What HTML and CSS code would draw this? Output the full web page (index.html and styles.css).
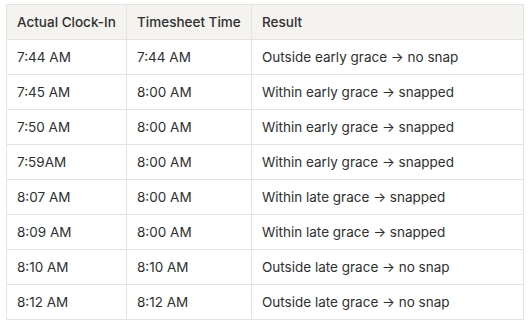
FILE: index.html
```html
<!DOCTYPE html>
<html>
<head>
<meta charset="utf-8">
<link rel="stylesheet" href="styles.css">
</head>
<body>
<table class="grace">
  <thead>
    <tr><th class="c1">Actual Clock-In</th><th class="c2">Timesheet Time</th><th>Result</th></tr>
  </thead>
  <tbody>
    <tr><td>7:44 AM</td><td>7:44 AM</td><td>Outside early grace → no snap</td></tr>
    <tr><td>7:45 AM</td><td>8:00 AM</td><td>Within early grace → snapped</td></tr>
    <tr><td>7:50 AM</td><td>8:00 AM</td><td>Within early grace → snapped</td></tr>
    <tr><td>7:59AM</td><td>8:00 AM</td><td>Within early grace → snapped</td></tr>
    <tr><td>8:07 AM</td><td>8:00 AM</td><td>Within late grace → snapped</td></tr>
    <tr><td>8:09 AM</td><td>8:00 AM</td><td>Within late grace → snapped</td></tr>
    <tr><td>8:10 AM</td><td>8:10 AM</td><td>Outside late grace → no snap</td></tr>
    <tr><td>8:12 AM</td><td>8:12 AM</td><td>Outside late grace → no snap</td></tr>
  </tbody>
</table>
</body>
</html>
```
FILE: styles.css
```css
html, body { margin: 0; padding: 0; background: #ffffff; }
body { padding: 4px 0 0 6px; font-family: Inter, "Noto Sans", sans-serif; }
.grace {
  border-collapse: collapse;
  width: 518px;
  table-layout: fixed;
  font-size: 13.5px;
  color: #2f2f2f;
}
.grace th, .grace td {
  border: 1px solid #e3e3e1;
  height: 35px;
  padding: 0 10px;
  text-align: left;
  font-weight: 400;
  box-sizing: border-box;
  white-space: nowrap;
}
.grace thead th { background: #f4f3ef; font-weight: 500; }
.grace .c1 { width: 120px; }
.grace .c2 { width: 125px; }
```
